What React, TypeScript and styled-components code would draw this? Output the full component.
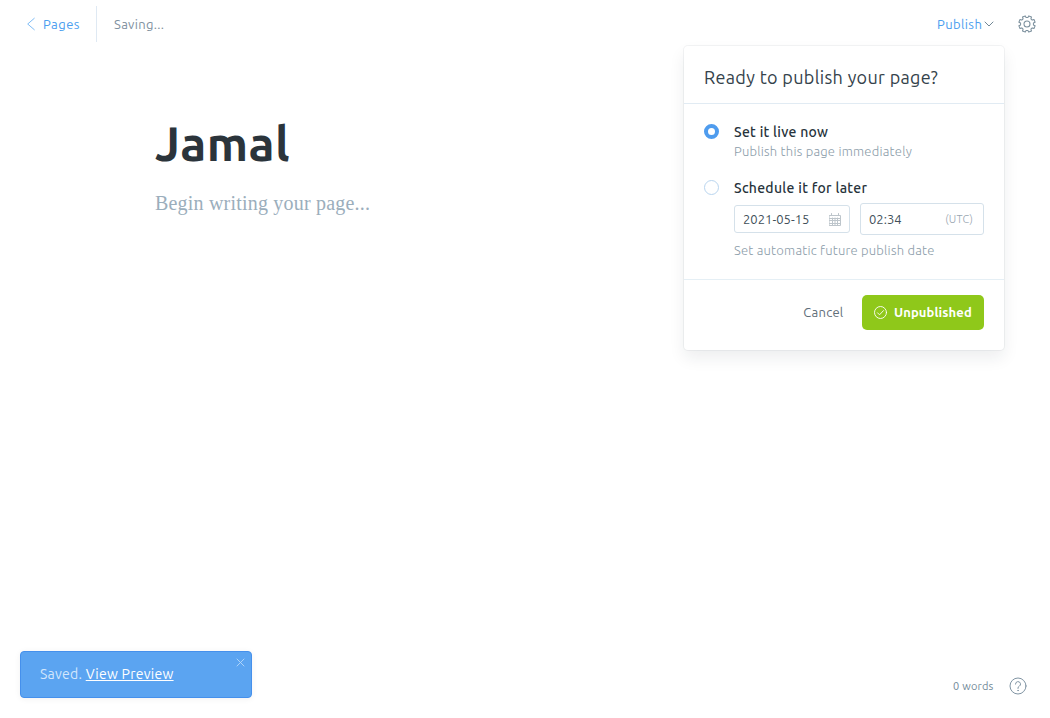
import React from "react";
import styled, { createGlobalStyle } from "styled-components";

const GlobalStyle = createGlobalStyle`
  * { box-sizing: border-box; }
  body { margin: 0; background: #fff; font-family: Ubuntu, "Noto Sans", "Open Sans", sans-serif; color: #394047; }
  button { font-family: inherit; border: 0; background: none; padding: 0; margin: 0; }
  h1, h2, p { margin: 0; }
`;

/* A line of text; tracking is the letter spacing in px. */
const Label = styled.span<{ $size: number; $color: string; $tracking?: number; $weight?: number; $line?: number }>`
  display: block;
  white-space: nowrap;
  font-size: ${(p) => p.$size}px;
  font-weight: ${(p) => p.$weight ?? 400};
  line-height: ${(p) => p.$line ?? 20}px;
  color: ${(p) => p.$color};
  letter-spacing: ${(p) => p.$tracking ?? 0.25}px;
`;

const Screen = styled.div`
  position: relative;
  display: flex;
  flex-direction: column;
  height: 718px;
  overflow: hidden;
`;
const Header = styled.header`
  display: flex;
  align-items: center;
  justify-content: space-between;
  height: 48px;
  padding: 0 14px 0 26px;
`;
const HeaderGroup = styled.div`
  display: flex;
  align-items: center;
`;
const BackLink = styled.a`
  display: flex;
  align-items: center;
  gap: 7px;
  width: 71px;
  height: 36px;
  border-right: 1px solid #dfe9f3;
  margin-right: 17px;
`;
const PublishMenu = styled.button`
  display: flex;
  align-items: center;
  justify-content: space-between;
  width: 57px;
  margin-right: 24px;
`;
const Icon = styled.svg`
  display: block;
  flex: none;
  fill: none;
  stroke: currentColor;
  stroke-linecap: round;
  stroke-linejoin: round;
`;
const Editor = styled.main`
  flex: 1;
  padding: 63px 155px 0;
`;
const Title = styled.h1`
  font-size: 48px;
  line-height: 64px;
  font-weight: 700;
  letter-spacing: 0.4px;
  color: #2b343b;
`;
const Placeholder = styled.p`
  margin-top: 13px;
  font-family: "Liberation Serif", serif;
  font-size: 20px;
  line-height: 30px;
  letter-spacing: 0.2px;
  color: #9baebc;
`;
const Popover = styled.section`
  position: absolute;
  left: 684px;
  top: 46px;
  width: 320px;
  height: 304px;
  border-radius: 4px;
  background: #fff;
  box-shadow: 0 0 0 1px rgba(99, 114, 130, 0.08), 0 8px 16px rgba(27, 39, 51, 0.08);
`;
const PopoverHeader = styled.div`
  height: 58px;
  padding: 18px 20px 0;
  border-bottom: 1px solid #e1ebf3;
`;
const PopoverBody = styled.div`
  display: flex;
  flex-direction: column;
  gap: 17px;
  height: 176px;
  padding: 18px 20px 0;
  border-bottom: 1px solid #e5eff5;
`;
const PopoverFooter = styled.div`
  display: flex;
  align-items: center;
  justify-content: flex-end;
  gap: 18.5px;
  padding: 15px 20px 0;
`;
const Option = styled.div`
  display: flex;
  gap: 15px;
`;
const Radio = styled.span<{ $on?: boolean }>`
  flex: none;
  width: 15px;
  height: 15px;
  margin-top: 2px;
  border-radius: 50%;
  background: #fff;
  border: ${(p) => (p.$on ? "4px solid #4f9cee" : "1px solid #b9d5ef")};
`;
const Fields = styled.div`
  display: flex;
  align-items: center;
  gap: 10px;
  height: 32px;
  margin: 5px 0 6px;
`;
const Field = styled.div<{ $width: number; $height: number; $end: number }>`
  display: flex;
  align-items: center;
  justify-content: space-between;
  width: ${(p) => p.$width}px;
  height: ${(p) => p.$height}px;
  padding: 0 ${(p) => p.$end}px 0 8px;
  border: 1px solid #d5e1ea;
  border-radius: 3px;
`;
const ConfirmButton = styled.button`
  display: flex;
  align-items: center;
  gap: 7px;
  width: 122px;
  height: 35px;
  padding-left: 12px;
  border-radius: 5px;
  background: #8fc81a;
  color: #fff;
`;
const Toast = styled.aside`
  position: absolute;
  left: 20px;
  bottom: 20px;
  display: flex;
  justify-content: space-between;
  width: 232px;
  height: 47px;
  padding: 12px 6px 0 19px;
  border: 1px solid #4590ec;
  border-radius: 4px;
  background: #5ba4f1;
  color: #b7d8fa;
  box-shadow: 0 1px 6px rgba(0, 0, 0, 0.06);
`;
const Message = styled.div`
  display: flex;
  gap: 3.5px;
`;
const PreviewLink = styled(Label)`
  text-decoration: underline;
  text-decoration-thickness: 1px;
  text-underline-offset: 1px;
`;
const CloseIcon = styled(Icon)`
  margin-top: -6px;
`;
const Status = styled.footer`
  display: flex;
  align-items: center;
  justify-content: flex-end;
  gap: 15.5px;
  height: 24px;
  margin: 0 23px 20px 0;
  color: #8094a3;
`;

const cogPath = (() => {
  const points: string[] = [];
  for (let i = 0; i < 8; i++) {
    const base = ((i + 0.5) * Math.PI) / 4;
    [[-0.18, 8.3], [0.18, 8.3], [0.25, 6.5], [0.535, 6.5]].forEach(([offset, radius]) => {
      const a = base + offset;
      points.push(`${(9 + radius * Math.sin(a)).toFixed(2)} ${(9 - radius * Math.cos(a)).toFixed(2)}`);
    });
  }
  return `M${points.join("L")}Z`;
})();

export default function App() {
  return (
    <Screen>
      <GlobalStyle />
      <Header>
        <HeaderGroup>
          <BackLink>
            <Icon width="10" height="14" viewBox="0 0 10 14" color="#71b4f4" strokeWidth="0.9">
              <path d="M8.3 1.3 1.7 7l6.6 5.7" />
            </Icon>
            <Label $size={13} $color="#4b9eef" $tracking={0.45}>Pages</Label>
          </BackLink>
          <Label $size={13} $color="#7f919f" $tracking={0.3}>Saving...</Label>
        </HeaderGroup>
        <HeaderGroup>
          <PublishMenu>
            <Label $size={13} $color="#4b9eef" $tracking={0.4}>Publish</Label>
            <Icon width="10" height="6" viewBox="0 0 10 6" color="#718795" strokeWidth="1">
              <path d="m1 1 4 4 4-4" />
            </Icon>
          </PublishMenu>
          <Icon width="18" height="18" viewBox="0 0 18 18" color="#7d919e" strokeWidth="1.05">
            <path d={cogPath} />
            <circle cx="9" cy="9" r="3" />
          </Icon>
        </HeaderGroup>
      </Header>

      <Editor>
        <Title>Jamal</Title>
        <Placeholder>Begin writing your page...</Placeholder>
      </Editor>

      <Status>
        <Label $size={11} $color="#738a99" $tracking={0.2}>0 words</Label>
        <Icon width="18" height="18" viewBox="0 0 18 18" strokeWidth="1">
          <circle cx="9" cy="9" r="8" />
          <path d="M6.5 7.1a2.5 2.5 0 1 1 3.7 2.2C9.3 9.8 9 10.2 9 11.2v.3" />
          <circle cx="9" cy="13.5" r=".25" />
        </Icon>
      </Status>

      <Popover>
        <PopoverHeader>
          <Label as="h2" $size={18} $color="#34424b" $line={26} $tracking={0.33}>Ready to publish your page?</Label>
        </PopoverHeader>
        <PopoverBody>
          <Option>
            <Radio $on />
            <div>
              <Label $size={14} $weight={500} $color="#27333b" $tracking={0.29}>Set it live now</Label>
              <Label $size={13} $weight={300} $line={19} $color="#8b9ca9" $tracking={0.23}>Publish this page immediately</Label>
            </div>
          </Option>
          <Option>
            <Radio />
            <div>
              <Label $size={14} $weight={500} $color="#27333b" $tracking={0.29}>Schedule it for later</Label>
              <Fields>
                <Field $width={116} $height={28} $end={8}>
                  <Label $size={13} $color="#414f59" $tracking={0.03}>2021-05-15</Label>
                  <Icon width="12" height="13" viewBox="0 0 12 13" color="#bdc5cb" strokeWidth="1">
                    <path d="M.5 2.5h11v10H.5zM.5 5.5h11M.5 7.5h11M.5 10.5h11M3.5 5v7.5M6 5v7.5M8.5 5v7.5M2.5.5v2M9.5.5v2" />
                  </Icon>
                </Field>
                <Field $width={124} $height={32} $end={10}>
                  <Label $size={13} $color="#414f59" $tracking={0.03}>02:34</Label>
                  <Label $size={11} $weight={300} $color="#98a5b0" $tracking={0.2}>(UTC)</Label>
                </Field>
              </Fields>
              <Label $size={13} $weight={300} $line={19} $color="#8b9ca9" $tracking={0.22}>Set automatic future publish date</Label>
            </div>
          </Option>
        </PopoverBody>
        <PopoverFooter>
          <Label as="button" $size={13} $line={19} $color="#5f6e79">Cancel</Label>
          <ConfirmButton>
            <Icon width="13" height="13" viewBox="0 0 13 13" strokeWidth="0.9">
              <circle cx="6.5" cy="6.5" r="6" />
              <path d="m3.5 6.8 2 2 4-4.2" />
            </Icon>
            <Label $size={13} $weight={700} $line={19} $color="#fff" $tracking={0.12}>Unpublished</Label>
          </ConfirmButton>
        </PopoverFooter>
      </Popover>

      <Toast>
        <Message>
          <Label $size={14} $color="#d3e7fc">Saved.</Label>
          <PreviewLink $size={14} $color="#fff" $tracking={0.26}>View Preview</PreviewLink>
        </Message>
        <CloseIcon width="9" height="9" viewBox="0 0 9 9" strokeWidth="0.9">
          <path d="m1 1 7 7M8 1 1 8" />
        </CloseIcon>
      </Toast>
    </Screen>
  );
}
